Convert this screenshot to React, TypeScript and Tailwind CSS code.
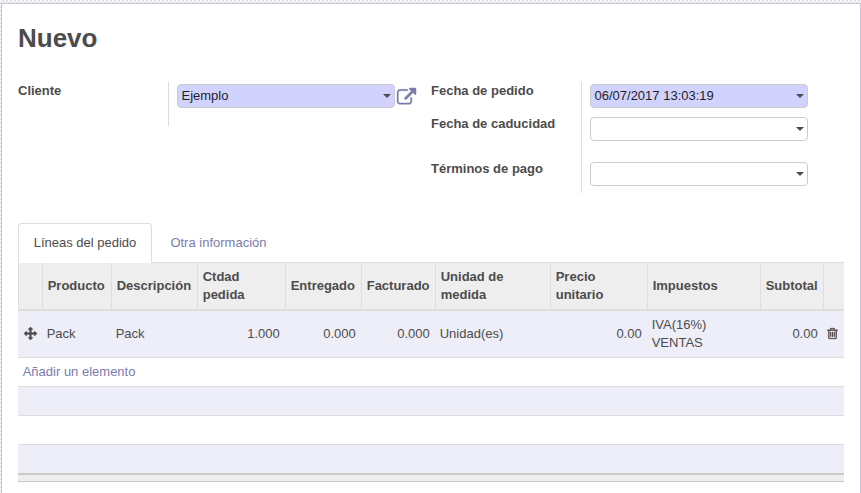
import React from "react";

const MOVE =
  "M1792 896q0 26-19 45l-256 256q-19 19-45 19t-45-19-19-45v-128h-384v384h128q26 0 45 19t19 45-19 45l-256 256q-19 19-45 19t-45-19l-256-256q-19-19-19-45t19-45 45-19h128v-384h-384v128q0 26-19 45t-45 19-45-19l-256-256q-19-19-19-45t19-45l256-256q19-19 45-19t45 19 19 45v128h384v-384h-128q-26 0-45-19t-19-45 19-45l256-256q19-19 45-19t45 19l256 256q19 19 19 45t-19 45-45 19h-128v384h384v-128q0-26 19-45t45-19 45 19l256 256q19 19 19 45z";
const EXTERNAL =
  "M1408 928v320q0 119-84.5 203.5t-203.5 84.5h-832q-119 0-203.5-84.5t-84.5-203.5v-832q0-119 84.5-203.5t203.5-84.5h704q14 0 23 9t9 23v64q0 14-9 23t-23 9h-704q-66 0-113 47t-47 113v832q0 66 47 113t113 47h832q66 0 113-47t47-113v-320q0-14 9-23t23-9h64q14 0 23 9t9 23zm384-864v512q0 26-19 45t-45 19-45-19l-176-176-652 652q-10 10-23 10t-23-10l-114-114q-10-10-10-23t10-23l652-652-176-176q-19-19-19-45t19-45 45-19h512q26 0 45 19t19 45z";
const TRASH =
  "M704 736v576q0 14-9 23t-23 9h-64q-14 0-23-9t-9-23v-576q0-14 9-23t23-9h64q14 0 23 9t9 23zm256 0v576q0 14-9 23t-23 9h-64q-14 0-23-9t-9-23v-576q0-14 9-23t23-9h64q14 0 23 9t9 23zm256 0v576q0 14-9 23t-23 9h-64q-14 0-23-9t-9-23v-576q0-14 9-23t23-9h64q14 0 23 9t9 23zm128 724v-948h-896v948q0 22 7 40.5t14.5 27 10.5 8.5h832q3 0 10.5-8.5t14.5-27 7-40.5zm-672-1076h448l-48-117q-7-9-17-11h-317q-10 2-17 11zm928 32v64q0 14-9 23t-23 9h-96v948q0 83-47 143.5t-113 60.5h-832q-66 0-113-58.5t-47-141.5v-952h-96q-14 0-23-9t-9-23v-64q0-14 9-23t23-9h309l70-167q15-37 54-63t79-26h320q40 0 79 26t54 63l70 167h309q14 0 23 9t9 23z";

function Icon({ d, className }: { d: string; className: string }) {
  return (
    <svg
      viewBox="0 0 1792 1792"
      fill="currentColor"
      stroke="currentColor"
      strokeWidth={40}
      className={`overflow-visible ${className}`}
      aria-hidden="true"
    >
      <path d={d} />
    </svg>
  );
}

function SelectField({ value, required }: { value: string; required?: boolean }) {
  return (
    <div
      className={`flex h-6 w-[218px] shrink-0 items-center justify-between rounded-[4px] border border-[#ccc] pr-[3px] pl-[3.5px] text-[#1f1f1f] ${
        required ? "bg-[#d2d2ff]" : "bg-white"
      }`}
    >
      <span>{value}</span>
      <span className="h-0 w-0 border-x-4 border-t-4 border-x-transparent border-t-[#4c4c4c]" />
    </div>
  );
}

const COLUMNS = "grid grid-cols-[24px_69px_86px_88px_76px_74px_115px_97px_113px_63px_21px]";

const HEADERS = [
  "",
  "Producto",
  "Descripción",
  "Ctdad pedida",
  "Entregado",
  "Facturado",
  "Unidad de medida",
  "Precio unitario",
  "Impuestos",
  "Subtotal",
  "",
];

export default function App() {
  return (
    <div className="h-[493px] w-[861px] overflow-hidden bg-[#f8f8f8] bg-[conic-gradient(#e2e2e6_25%,#f8f8f8_0_50%,#e2e2e6_0_75%,#f8f8f8_0)] bg-[length:4px_4px] pt-[3px] pl-px font-['Liberation_Sans',Arial,sans-serif] text-[13px] leading-[18px] text-[#4c4c4c]">
      <div className="h-[520px] border border-[#c8c8d3] bg-white px-4 pt-[19px]">
        <h1 className="text-[26px] leading-[30px] font-bold">Nuevo</h1>

        <div className="mt-[29px] flex h-[111px] items-start">
          <div className="w-[150px] shrink-0 font-bold">Cliente</div>
          <div className="flex h-11 w-[263px] shrink-0 items-start border-l border-[#ddd] pt-0.5 pl-2">
            <SelectField value="Ejemplo" required />
            <Icon d={EXTERNAL} className="mt-1 ml-[2px] h-[19px] w-[19px] text-[#7c7bad]" />
          </div>
          <div className="flex w-[150px] shrink-0 flex-col font-bold">
            <div className="h-[33px]">Fecha de pedido</div>
            <div className="h-[45px]">Fecha de caducidad</div>
            <div>Términos de pago</div>
          </div>
          <div className="flex h-[111px] flex-col border-l border-[#ddd] pt-0.5 pl-2">
            <div className="h-[33px]">
              <SelectField value="06/07/2017 13:03:19" required />
            </div>
            <div className="h-[45px]">
              <SelectField value="" />
            </div>
            <SelectField value="" />
          </div>
        </div>

        <div className="mt-[30px] flex h-10">
          <div className="flex w-[134px] items-center justify-center rounded-t-[4px] border border-b-0 border-[#ddd] pb-px">
            Líneas del pedido
          </div>
          <div className="flex flex-1 items-center border-b border-[#ddd] pt-px pl-[18.4px] text-[#7c7bad]">
            Otra información
          </div>
        </div>

        <div className="w-[826px]">
          <div className={`${COLUMNS} h-12 border-b-2 border-[#ddd] bg-[#eee] font-bold`}>
            {HEADERS.map((label, i) => (
              <div
                key={i}
                className="flex items-center border-l border-[#ddd] pr-1 pl-[4.7px]"
              >
                {label}
              </div>
            ))}
          </div>
          <div className={`${COLUMNS} h-[47px] items-center border-b border-[#ddd] bg-[#eeeef8]`}>
            <Icon d={MOVE} className="mb-[2px] ml-[6px] h-[13px] w-[13px]" />
            <div className="pl-[4.7px]">Pack</div>
            <div className="pl-[4.7px]">Pack</div>
            <div className="pr-[5.3px] text-right">1.000</div>
            <div className="pr-[5.3px] text-right">0.000</div>
            <div className="pr-[5.3px] text-right">0.000</div>
            <div className="pl-[4.7px]">Unidad(es)</div>
            <div className="pr-[5.3px] text-right">0.00</div>
            <div className="pl-[4.7px]">
              IVA(16%)
              <br />
              VENTAS
            </div>
            <div className="pr-[5.3px] text-right">0.00</div>
            <Icon d={TRASH} className="mb-[2px] ml-[3px] h-[13px] w-[13px] text-[#4c4040]" />
          </div>
          <div className="flex h-[29px] items-center border-b border-[#ddd] pl-[4.7px] text-[#7c7bad]">
            Añadir un elemento
          </div>
          <div className="h-[29px] border-b border-[#ddd] bg-[#eeeef8]" />
          <div className="h-[29px] border-b border-[#ddd]" />
          <div className="h-7 bg-[#eeeef8]" />
          <div className="h-[9px] border-t-2 border-b border-[#cacaca] bg-[#eee]" />
        </div>
      </div>
    </div>
  );
}
